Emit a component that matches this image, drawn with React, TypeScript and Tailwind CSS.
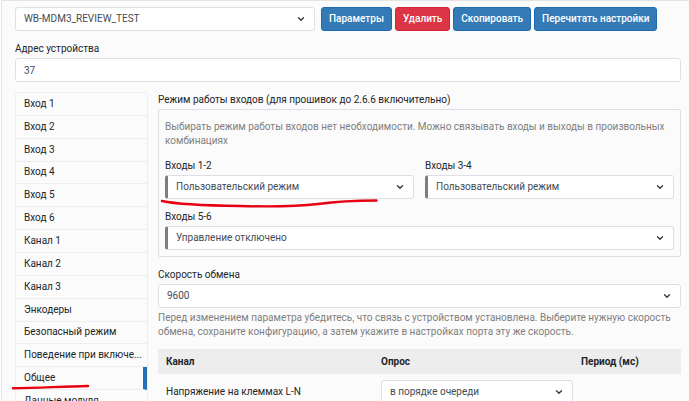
import type { ReactNode } from 'react'
import { useState } from 'react'

const TABS = [
  'Вход 1',
  'Вход 2',
  'Вход 3',
  'Вход 4',
  'Вход 5',
  'Вход 6',
  'Канал 1',
  'Канал 2',
  'Канал 3',
  'Энкодеры',
  'Безопасный режим',
  'Поведение при включе...',
  'Общее',
  'Данные модуля',
]

type SelectProps = {
  id: string
  value: string
  marked?: boolean
  label?: string
}

function Select({ id, value, marked, label }: SelectProps) {
  return (
    <div className="relative">
      <select
        id={id}
        aria-label={label}
        className={
          marked
            ? 'block h-6 w-full appearance-none rounded-[3px] border border-l-3 border-[#dcdfe5] border-l-[#7f7d7e] bg-white pr-6 pl-2 text-[#454b54]'
            : 'block h-6 w-full appearance-none rounded-[3px] border border-[#dcdfe5] bg-white pr-6 pl-2 text-[#454b54]'
        }
      >
        <option>{value}</option>
      </select>
      <svg
        viewBox="0 0 8 6"
        className="pointer-events-none absolute top-[9px] right-[10px] h-[6px] w-[8px]"
        fill="none"
        stroke="#343a40"
        strokeWidth="1.4"
        strokeLinecap="round"
        strokeLinejoin="round"
      >
        <path d="M1.5 1.7 L4 4.2 L6.5 1.7" />
      </svg>
    </div>
  )
}

function Label({ htmlFor, children }: { htmlFor: string; children: ReactNode }) {
  return (
    <label htmlFor={htmlFor} className="mb-[2px] block">
      {children}
    </label>
  )
}

const BLUE_BUTTON =
  'h-6 rounded-[3px] border border-[#1f69ae] bg-[#337ab7] px-[7px] font-medium whitespace-nowrap text-white'
const RED_BUTTON =
  'h-6 rounded-[3px] border border-[#d02537] bg-[#dc3545] px-[7px] font-medium whitespace-nowrap text-white'

export default function App() {
  const [active, setActive] = useState('Общее')

  return (
    <div className="relative h-screen overflow-hidden bg-white pl-px font-['Roboto',sans-serif] text-[10px] leading-[14px] text-[#212529]">
      <main className="min-h-full border-t border-l border-[#e4e4e4] bg-[#fbfbfb] pt-[6px] pr-2 pl-[13px]">
        {/* Устройство и действия */}
        <div className="flex items-center gap-[6px]">
          <div className="w-[300px]">
            <Select id="device" value="WB-MDM3_REVIEW_TEST" label="Устройство" />
          </div>
          <div className="flex gap-[3px]">
            <button className={BLUE_BUTTON}>Параметры</button>
            <button className={RED_BUTTON}>Удалить</button>
            <button className={BLUE_BUTTON}>Скопировать</button>
            <button className={BLUE_BUTTON}>Перечитать настройки</button>
          </div>
        </div>

        <div className="mt-[11px]">
          <Label htmlFor="address">Адрес устройства</Label>
          <input
            id="address"
            defaultValue="37"
            className="block h-6 w-full rounded-[3px] border border-[#dcdfe5] bg-white px-2 text-[#454b54]"
          />
        </div>

        <div className="mt-[10px] flex items-start gap-[10px]">
          {/* Вкладки */}
          <nav className="grid min-h-[322px] w-[133px] shrink-0 auto-rows-fr rounded-t-[3px] border border-[#eeeeee]">
            {TABS.map((tab) => (
              <button
                key={tab}
                onClick={() => setActive(tab)}
                className={
                  tab === active
                    ? 'truncate border-r-4 border-b border-r-[#2372b9] border-b-[#eeeeee] pl-2 text-left'
                    : 'truncate border-b border-[#eeeeee] pl-2 text-left'
                }
              >
                {tab}
              </button>
            ))}
          </nav>

          {/* Параметры */}
          <section className="min-w-0 flex-1 pt-px">
            <h2 className="mb-[2px]">Режим работы входов (для прошивок до 2.6.6 включительно)</h2>
            <div className="rounded-[2px] border border-[#dcdfe5] px-[6px] pt-[10px] pb-[6px]">
              <p className="text-[#7f7f7f]">
                Выбирать режим работы входов нет необходимости. Можно связывать входы и выходы в
                произвольных комбинациях
              </p>
              <div className="mt-[11px] grid grid-cols-2 gap-[11px]">
                <div>
                  <Label htmlFor="in12">Входы 1-2</Label>
                  <Select id="in12" value="Пользовательский режим" marked />
                </div>
                <div>
                  <Label htmlFor="in34">Входы 3-4</Label>
                  <Select id="in34" value="Пользовательский режим" marked />
                </div>
                <div className="col-span-2">
                  <Label htmlFor="in56">Входы 5-6</Label>
                  <Select id="in56" value="Управление отключено" marked />
                </div>
              </div>
            </div>

            <div className="mt-[11px]">
              <Label htmlFor="baud">Скорость обмена</Label>
              <Select id="baud" value="9600" />
              <p className="mt-[3px] text-[#7f7f7f]">
                Перед изменением параметра убедитесь, что связь с устройством установлена. Выберите
                нужную скорость обмена, сохраните конфигурацию, а затем укажите в настройках порта
                эту же скорость.
              </p>
            </div>

            <table className="mt-[10px] w-full table-fixed text-left">
              <colgroup>
                <col className="w-[215px]" />
                <col className="w-[200px]" />
                <col />
              </colgroup>
              <thead>
                <tr className="h-[25px] bg-[#ededed]">
                  <th className="px-2 font-bold">Канал</th>
                  <th className="px-2 font-bold">Опрос</th>
                  <th className="px-2 font-bold">Период (мс)</th>
                </tr>
              </thead>
              <tbody>
                <tr>
                  <td className="px-2 py-[6px]">Напряжение на клеммах L-N</td>
                  <td className="py-[6px] pl-2">
                    <Select id="poll" value="в порядке очереди" label="Опрос" />
                  </td>
                  <td></td>
                </tr>
              </tbody>
            </table>
          </section>
        </div>
      </main>

      {/* Пометки от руки */}
      <svg
        className="pointer-events-none absolute top-0 left-0 h-[401px] w-[689px]"
        viewBox="0 0 689 401"
        fill="none"
        stroke="#e60012"
        strokeWidth="2.4"
        strokeLinecap="round"
      >
        <path d="M162 201 C178 204.500 205 205.500 240 206 C275 207 297 206.500 318 204 C340 201 350 200.500 376.500 200.500" />
        <path d="M13 388.300 C38 388 62 386.500 88 386" />
      </svg>
    </div>
  )
}
